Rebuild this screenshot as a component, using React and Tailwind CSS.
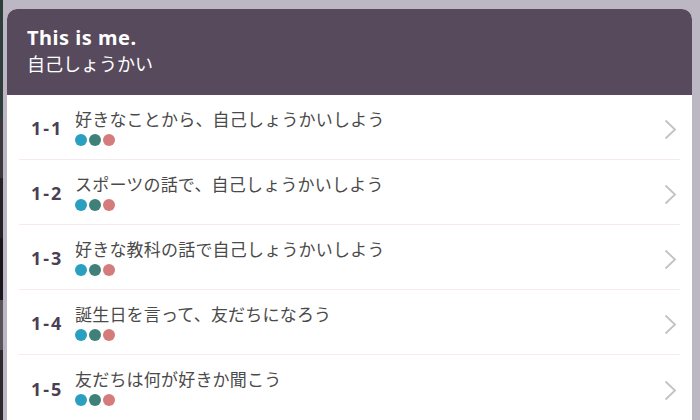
const lessons = [
  { id: '1-1', title: '好きなことから、自己しょうかいしよう' },
  { id: '1-2', title: 'スポーツの話で、自己しょうかいしよう' },
  { id: '1-3', title: '好きな教科の話で自己しょうかいしよう' },
  { id: '1-4', title: '誕生日を言って、友だちになろう' },
  { id: '1-5', title: '友だちは何が好きか聞こう' },
];

const font = { fontFamily: '"Noto Sans", "Noto Sans CJK JP", sans-serif' };

function Chevron() {
  return (
    <svg width="13" height="21" viewBox="0 0 13 21" className="mr-[3px] mt-[5px] shrink-0">
      <polyline points="1.5,1.5 11,10.5 1.5,19.5" fill="none" stroke="#c2c2c2" strokeWidth="1.8" />
    </svg>
  );
}

export default function App() {
  return (
    <div className="flex h-[420px] w-[700px] overflow-hidden bg-[#bdb7c4]" style={font}>
      {/* backdrop peeking in on the left */}
      <div className="flex w-[3px] shrink-0 flex-col">
        <div className="h-[118px] bg-[#2f3e3b]"></div>
        <div className="h-[60px] bg-[#3b3b3d]"></div>
        <div className="h-[60px] bg-[#262326]"></div>
        <div className="h-[62px] bg-[#1c161a]"></div>
        <div className="h-[50px] bg-[#56555a]"></div>
        <div className="flex-1 bg-[#2c2a2d]"></div>
      </div>

      <div className="ml-[4px] mt-[9px] flex w-[685px] flex-col overflow-hidden rounded-t-[10px] bg-white">
        <div className="h-[86px] shrink-0 bg-[#574a5d] px-[20px] pt-[16px] text-white">
          <div className="text-[20px] font-bold leading-[26px] tracking-[0.5px]">This is me.</div>
          <div className="text-[18px] leading-[26px]">自己しょうかい</div>
        </div>

        <div className="flex flex-col px-[12px]">
          {lessons.map((lesson, i) => (
            <div
              key={lesson.id}
              className={`flex h-[65px] shrink-0 items-center ${i < lessons.length - 1 ? 'border-b border-[#f7e9ee]' : ''}`}
            >
              <div className="w-[56px] shrink-0 pl-[12px] pt-[2px] text-[18px] font-bold leading-none tracking-[2px] text-[#4b3f55]">
                {lesson.id}
              </div>
              <div className="flex flex-1 flex-col">
                <div className="text-[17px] leading-[22px] tracking-[0.2px] text-[#4a4a4a]">{lesson.title}</div>
                <div className="mt-[3px] flex gap-[2px]">
                  <span className="h-[12px] w-[12px] rounded-full bg-[#2a9fc0]"></span>
                  <span className="h-[12px] w-[12px] rounded-full bg-[#3f8078]"></span>
                  <span className="h-[12px] w-[12px] rounded-full bg-[#d47c7c]"></span>
                </div>
              </div>
              <Chevron />
            </div>
          ))}
        </div>
      </div>
    </div>
  );
}
